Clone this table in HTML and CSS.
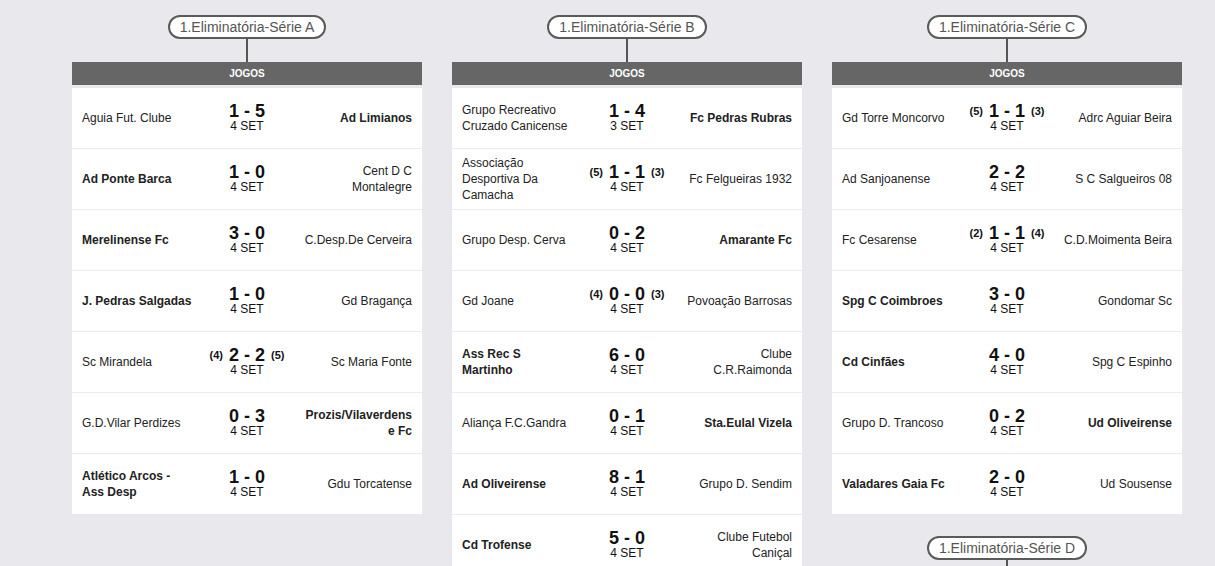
FILE: index.html
```html
<!DOCTYPE html>
<html lang="pt">
<head>
<meta charset="utf-8">
<title>Eliminatórias</title>
<link rel="stylesheet" href="styles.css">
</head>
<body>
<main class="board">
  <section class="col">
    <div class="stage">
      <div class="pill">1.Eliminatória-Série A</div>
      <div class="stem"></div>
      <div class="card">
        <div class="card-head">JOGOS</div>
        <div class="match"><div class="team">Aguia Fut. Clube</div><div class="score"><div class="res">1 - 5</div><div class="sets">4 SET</div></div><div class="team away win">Ad Limianos</div></div>
        <div class="match"><div class="team win">Ad Ponte Barca</div><div class="score"><div class="res">1 - 0</div><div class="sets">4 SET</div></div><div class="team away">Cent D C Montalegre</div></div>
        <div class="match"><div class="team win">Merelinense Fc</div><div class="score"><div class="res">3 - 0</div><div class="sets">4 SET</div></div><div class="team away">C.Desp.De Cerveira</div></div>
        <div class="match"><div class="team win">J. Pedras Salgadas</div><div class="score"><div class="res">1 - 0</div><div class="sets">4 SET</div></div><div class="team away">Gd Bragança</div></div>
        <div class="match"><div class="team">Sc Mirandela</div><div class="score"><div class="res"><span class="pen">(4)</span>2 - 2<span class="pen">(5)</span></div><div class="sets">4 SET</div></div><div class="team away">Sc Maria Fonte</div></div>
        <div class="match"><div class="team">G.D.Vilar Perdizes</div><div class="score"><div class="res">0 - 3</div><div class="sets">4 SET</div></div><div class="team away win">Prozis/Vilaverdense Fc</div></div>
        <div class="match"><div class="team win">Atlético Arcos - Ass Desp</div><div class="score"><div class="res">1 - 0</div><div class="sets">4 SET</div></div><div class="team away">Gdu Torcatense</div></div>
      </div>
    </div>
  </section>

  <section class="col">
    <div class="stage">
      <div class="pill">1.Eliminatória-Série B</div>
      <div class="stem"></div>
      <div class="card">
        <div class="card-head">JOGOS</div>
        <div class="match"><div class="team">Grupo Recreativo Cruzado Canicense</div><div class="score"><div class="res">1 - 4</div><div class="sets">3 SET</div></div><div class="team away win">Fc Pedras Rubras</div></div>
        <div class="match"><div class="team">Associação Desportiva Da Camacha</div><div class="score"><div class="res"><span class="pen">(5)</span>1 - 1<span class="pen">(3)</span></div><div class="sets">4 SET</div></div><div class="team away">Fc Felgueiras 1932</div></div>
        <div class="match"><div class="team">Grupo Desp. Cerva</div><div class="score"><div class="res">0 - 2</div><div class="sets">4 SET</div></div><div class="team away win">Amarante Fc</div></div>
        <div class="match"><div class="team">Gd Joane</div><div class="score"><div class="res"><span class="pen">(4)</span>0 - 0<span class="pen">(3)</span></div><div class="sets">4 SET</div></div><div class="team away">Povoação Barrosas</div></div>
        <div class="match"><div class="team win">Ass Rec S Martinho</div><div class="score"><div class="res">6 - 0</div><div class="sets">4 SET</div></div><div class="team away">Clube C.R.Raimonda</div></div>
        <div class="match"><div class="team">Aliança F.C.Gandra</div><div class="score"><div class="res">0 - 1</div><div class="sets">4 SET</div></div><div class="team away win">Sta.Eulal Vizela</div></div>
        <div class="match"><div class="team win">Ad Oliveirense</div><div class="score"><div class="res">8 - 1</div><div class="sets">4 SET</div></div><div class="team away">Grupo D. Sendim</div></div>
        <div class="match"><div class="team win">Cd Trofense</div><div class="score"><div class="res">5 - 0</div><div class="sets">4 SET</div></div><div class="team away">Clube Futebol Caniçal</div></div>
      </div>
    </div>
  </section>

  <section class="col">
    <div class="stage">
      <div class="pill">1.Eliminatória-Série C</div>
      <div class="stem"></div>
      <div class="card">
        <div class="card-head">JOGOS</div>
        <div class="match"><div class="team">Gd Torre Moncorvo</div><div class="score"><div class="res"><span class="pen">(5)</span>1 - 1<span class="pen">(3)</span></div><div class="sets">4 SET</div></div><div class="team away">Adrc Aguiar Beira</div></div>
        <div class="match"><div class="team">Ad Sanjoanense</div><div class="score"><div class="res">2 - 2</div><div class="sets">4 SET</div></div><div class="team away">S C Salgueiros 08</div></div>
        <div class="match"><div class="team">Fc Cesarense</div><div class="score"><div class="res"><span class="pen">(2)</span>1 - 1<span class="pen">(4)</span></div><div class="sets">4 SET</div></div><div class="team away">C.D.Moimenta Beira</div></div>
        <div class="match"><div class="team win">Spg C Coimbroes</div><div class="score"><div class="res">3 - 0</div><div class="sets">4 SET</div></div><div class="team away">Gondomar Sc</div></div>
        <div class="match"><div class="team win">Cd Cinfães</div><div class="score"><div class="res">4 - 0</div><div class="sets">4 SET</div></div><div class="team away">Spg C Espinho</div></div>
        <div class="match"><div class="team">Grupo D. Trancoso</div><div class="score"><div class="res">0 - 2</div><div class="sets">4 SET</div></div><div class="team away win">Ud Oliveirense</div></div>
        <div class="match"><div class="team win">Valadares Gaia Fc</div><div class="score"><div class="res">2 - 0</div><div class="sets">4 SET</div></div><div class="team away">Ud Sousense</div></div>
      </div>
    </div>
    <div class="stage">
      <div class="pill">1.Eliminatória-Série D</div>
      <div class="stem"></div>
    </div>
  </section>
</main>
</body>
</html>
```

FILE: styles.css
```css
html, body {
  margin: 0;
  padding: 0;
}

body {
  background: #e9e8ed;
  font-family: "Liberation Sans", Arial, sans-serif;
  color: #222;
  overflow: hidden;
}

.board {
  display: flex;
  align-items: flex-start;
  gap: 30px;
  padding: 15px 0 0 72px;
}

.col {
  width: 350px;
  display: flex;
  flex-direction: column;
  gap: 22px;
}

.stage {
  display: flex;
  flex-direction: column;
  align-items: center;
}

.pill {
  box-sizing: border-box;
  height: 24px;
  padding: 0 10px;
  border: 2px solid #5a5a5a;
  border-radius: 12px;
  background: #fff;
  color: #555;
  font-size: 14px;
  line-height: 20px;
  white-space: nowrap;
}

.stem {
  width: 2px;
  height: 23px;
  background: #555;
}

.card {
  width: 350px;
}

.card-head {
  height: 23px;
  line-height: 24px;
  margin-bottom: 3px;
  background: #666;
  color: #fff;
  font-size: 10px;
  font-weight: bold;
  text-align: center;
}

.match {
  box-sizing: border-box;
  height: 60px;
  padding: 0 10px;
  background: #fff;
  display: grid;
  grid-template-columns: 110px 110px 110px;
  align-items: center;
}

.match + .match {
  height: 61px;
  border-top: 1px solid #ebebef;
}

.team {
  font-size: 12px;
  line-height: 16px;
  color: #222;
  overflow-wrap: break-word;
}

.team.away {
  text-align: right;
}

.team.win {
  font-weight: bold;
}

.score {
  text-align: center;
  color: #111;
}

.res {
  font-size: 18px;
  line-height: 17px;
  font-weight: bold;
  white-space: nowrap;
}

.pen {
  font-size: 11px;
  margin: 0 6px;
  vertical-align: 2px;
}

.sets {
  font-size: 12px;
  line-height: 13px;
}
```
